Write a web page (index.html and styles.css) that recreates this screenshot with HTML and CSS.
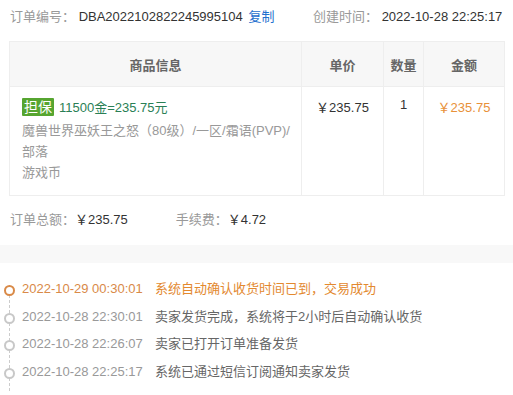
FILE: index.html
```html
<!DOCTYPE html>
<html lang="zh-CN">
<head>
    <meta charset="UTF-8">
    <meta name="viewport" content="width=device-width, initial-scale=1.0">
    <title>订单详情</title>
    <link rel="stylesheet" href="styles.css">
</head>
<body>
    <div class="order-head">
        <div class="order-no">
            <span class="label">订单编号：</span>
            <span class="value">DBA2022102822245995104</span>
            <a class="copy">复制</a>
        </div>
        <div class="order-time">
            <span class="label">创建时间：</span>
            <span class="value">2022-10-28 22:25:17</span>
        </div>
    </div>

    <table class="goods">
        <thead>
            <tr>
                <th class="col-info">商品信息</th>
                <th class="col-price">单价</th>
                <th class="col-num">数量</th>
                <th class="col-amount">金额</th>
            </tr>
        </thead>
        <tbody>
            <tr>
                <td class="info">
                    <div class="title"><span class="tag">担保</span>11500金=235.75元</div>
                    <div class="desc">魔兽世界巫妖王之怒（80级）/一区/霜语(PVP)/<br>部落</div>
                    <div class="desc">游戏币</div>
                </td>
                <td class="price">￥235.75</td>
                <td class="num">1</td>
                <td class="amount">￥235.75</td>
            </tr>
        </tbody>
    </table>

    <div class="summary">
        <div><span class="label">订单总额：</span><span class="value">￥235.75</span></div>
        <div><span class="label">手续费：</span><span class="value">￥4.72</span></div>
    </div>

    <div class="band"></div>

    <ul class="timeline">
        <li class="active">
            <span class="dot"></span>
            <span class="time">2022-10-29 00:30:01</span>
            <span class="text">系统自动确认收货时间已到，交易成功</span>
        </li>
        <li>
            <span class="dot"></span>
            <span class="time">2022-10-28 22:30:01</span>
            <span class="text">卖家发货完成，系统将于2小时后自动确认收货</span>
        </li>
        <li>
            <span class="dot"></span>
            <span class="time">2022-10-28 22:26:07</span>
            <span class="text">卖家已打开订单准备发货</span>
        </li>
        <li>
            <span class="dot"></span>
            <span class="time">2022-10-28 22:25:17</span>
            <span class="text">系统已通过短信订阅通知卖家发货</span>
        </li>
    </ul>
</body>
</html>
```

FILE: styles.css
```css
body {
    margin: 0;
    font-family: "Liberation Sans", Arial, "Noto Sans CJK SC", sans-serif;
    font-size: 13px;
    color: #333;
    background: #fff;
    overflow: hidden;
}
.label {
    color: #999;
}
.value {
    color: #333;
}
.order-head {
    display: flex;
    padding: 9px 8px 0 10px;
    height: 32px;
    box-sizing: border-box;
    line-height: 16px;
}
.order-no {
    width: 303px;
}
.copy {
    color: #1e6fce;
    margin-left: 2px;
}
.goods {
    margin: 9px 0 0 9px;
    width: 496px;
    border-collapse: collapse;
    border: 1px solid #eee;
}
.goods th {
    height: 44px;
    background: #f7f7f7;
    color: #666;
    font-weight: bold;
    border-left: 1px solid #eee;
    border-bottom: 1px solid #eee;
    padding: 0;
}
.goods td {
    vertical-align: top;
    border-left: 1px solid #eee;
    padding: 0;
}
.col-info {
    width: 291px;
}
.col-price {
    width: 81px;
}
.col-num {
    width: 39px;
}
.info {
    padding: 11px 8px 12px 12px !important;
    line-height: 21px;
    white-space: nowrap;
}
.title {
    color: #2a7f55;
    height: 20px;
    line-height: 20px;
    margin-bottom: 2px;
}
.tag {
    display: inline-block;
    background: #56a530;
    color: #fff;
    font-size: 14px;
    padding: 0 2px;
    line-height: 18px;
    margin-right: 5px;
    border-radius: 1px;
}
.desc {
    color: #999;
}
.price, .num, .amount {
    text-align: center;
}
.price {
    padding-top: 11px !important;
    line-height: 20px;
}
.num {
    padding-top: 8px !important;
    line-height: 20px;
}
.amount {
    padding-top: 11px !important;
    line-height: 20px;
    color: #e8913a;
}
.summary {
    display: flex;
    gap: 48px;
    padding: 16px 10px 0 10px;
    height: 49px;
    box-sizing: border-box;
    line-height: 16px;
}
.band {
    height: 18px;
    background: #f8f8f8;
}
.timeline {
    list-style: none;
    margin: 0;
    padding: 18px 0 0 0;
}
.timeline li {
    position: relative;
    display: flex;
    height: 27.6px;
    line-height: 16px;
    padding-left: 22px;
}
.timeline li::before {
    content: "";
    position: absolute;
    left: 9px;
    top: 14px;
    height: 18px;
    border-left: 1px dashed #ccc;
}
.dot {
    position: absolute;
    left: 4px;
    top: 4px;
    width: 7px;
    height: 7px;
    border: 2px solid #c8c8c8;
    border-radius: 50%;
    background: #fff;
}
.time {
    width: 133px;
    color: #999;
}
.text {
    color: #666;
}
.active .dot {
    border-color: #d98a48;
}
.active .time {
    color: #d98a48;
}
.active .text {
    color: #e3892f;
}
```
